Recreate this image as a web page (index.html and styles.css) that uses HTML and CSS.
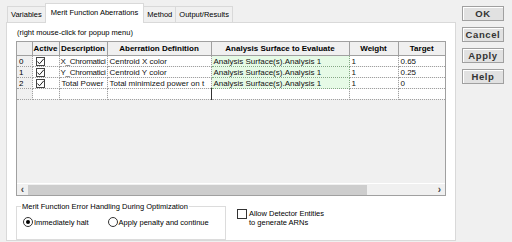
FILE: index.html
```html
<!DOCTYPE html>
<html lang="en">
<head>
    <meta charset="UTF-8">
    <title>Merit Function Aberrations</title>
    <link rel="stylesheet" href="styles.css">
</head>
<body>
    <div class="main">
        <div class="tabs">
            <div class="tab">Variables</div>
            <div class="tab active">Merit Function Aberrations</div>
            <div class="tab">Method</div>
            <div class="tab">Output/Results</div>
        </div>
        <div class="panel">
            <div class="hint">(right mouse-click for popup menu)</div>
            <div class="grid">
                <table>
                    <colgroup>
                        <col class="c-row"><col class="c-active"><col class="c-desc"><col class="c-def"><col class="c-surf"><col class="c-weight"><col class="c-target">
                    </colgroup>
                    <thead>
                        <tr>
                            <th></th>
                            <th>Active</th>
                            <th>Description</th>
                            <th>Aberration Definition</th>
                            <th>Analysis Surface to Evaluate</th>
                            <th>Weight</th>
                            <th>Target</th>
                        </tr>
                    </thead>
                    <tbody>
                        <tr>
                            <th>0</th>
                            <td><span class="check"><svg width="9" height="9" viewBox="0 0 9 9"><path d="M1.5 4.5 L3.5 6.8 L7.8 1.8" fill="none" stroke="#222" stroke-width="1"/></svg></span></td>
                            <td class="tight">X_Chromatici</td>
                            <td>Centroid X color</td>
                            <td class="surf">Analysis Surface(s).Analysis 1</td>
                            <td>1</td>
                            <td>0.65</td>
                        </tr>
                        <tr>
                            <th>1</th>
                            <td><span class="check"><svg width="9" height="9" viewBox="0 0 9 9"><path d="M1.5 4.5 L3.5 6.8 L7.8 1.8" fill="none" stroke="#222" stroke-width="1"/></svg></span></td>
                            <td class="tight">Y_Chromatici</td>
                            <td>Centroid Y color</td>
                            <td class="surf">Analysis Surface(s).Analysis 1</td>
                            <td>1</td>
                            <td>0.25</td>
                        </tr>
                        <tr>
                            <th>2</th>
                            <td><span class="check"><svg width="9" height="9" viewBox="0 0 9 9"><path d="M1.5 4.5 L3.5 6.8 L7.8 1.8" fill="none" stroke="#222" stroke-width="1"/></svg></span></td>
                            <td>Total Power</td>
                            <td>Total minimized power on t</td>
                            <td class="surf">Analysis Surface(s).Analysis 1</td>
                            <td>1</td>
                            <td>0</td>
                        </tr>
                        <tr>
                            <th></th>
                            <td></td>
                            <td></td>
                            <td></td>
                            <td class="cursor"></td>
                            <td></td>
                            <td></td>
                        </tr>
                    </tbody>
                </table>
                <div class="grid-empty"></div>
                <div class="hscroll">
                    <span class="arrow">&lsaquo;</span>
                    <span class="thumb"></span>
                    <span class="track"></span>
                    <span class="arrow">&rsaquo;</span>
                </div>
            </div>
            <div class="bottom">
                <fieldset class="group">
                    <legend>Merit Function Error Handling During Optimization</legend>
                    <div class="radios">
                        <label class="radio"><span class="dot on"></span>Immediately halt</label>
                        <label class="radio"><span class="dot"></span>Apply penalty and continue</label>
                    </div>
                </fieldset>
                <label class="option">
                    <span class="box"></span>
                    <span>Allow Detector Entities<br>to generate ARNs</span>
                </label>
            </div>
        </div>
    </div>
    <div class="buttons">
        <button>OK</button>
        <button>Cancel</button>
        <button>Apply</button>
        <button>Help</button>
    </div>
</body>
</html>
```

FILE: styles.css
```css
body {
    margin: 0;
    width: 512px;
    height: 242px;
    overflow: hidden;
    background-color: #f0f0f0;
    font-family: 'Liberation Sans', Arial, sans-serif;
    font-size: 7.5px;
    color: #000;
    display: flex;
}
.main {
    width: 456px;
    padding: 2px 0 1px 6px;
    box-sizing: border-box;
    display: flex;
    flex-direction: column;
}
.tabs {
    display: flex;
    align-items: flex-end;
    height: 20px;
    padding-left: 1px;
}
.tab {
    height: 16px;
    padding: 0 3px;
    border: 1px solid #d9d9d9;
    border-bottom: none;
    margin-right: -1px;
    display: flex;
    align-items: center;
    box-sizing: border-box;
    background-color: #f0f0f0;
}
.tab.active {
    height: 20px;
    padding: 0 5px 2px;
    background-color: white;
    position: relative;
    top: 1px;
    z-index: 1;
}
.panel {
    flex: 1;
    background-color: white;
    border: 1px solid #d9d9d9;
    padding: 0 8px 0 9px;
    display: flex;
    flex-direction: column;
}
.hint {
    margin: 5px 0 0 1px;
    height: 10px;
    line-height: 10px;
}
.grid {
    margin-top: 3px;
    width: 430px;
    height: 155px;
    border: 1px solid #a0a0a0;
    box-sizing: border-box;
    background-color: #f0f0f0;
    display: flex;
    flex-direction: column;
}
table {
    border-collapse: collapse;
    table-layout: fixed;
    width: 428px;
    font-size: 8px;
}
.c-row { width: 15px; }
.c-active { width: 27px; }
.c-desc { width: 48px; }
.c-def { width: 104px; }
.c-surf { width: 138px; }
.c-weight { width: 49px; }
.c-target { width: 47px; }
thead th {
    height: 13px;
    padding: 0;
    background-color: #f0f0f0;
    border-right: 1px solid #a0a0a0;
    border-bottom: 1px solid #a0a0a0;
    font-weight: bold;
    text-align: center;
    white-space: nowrap;
    overflow: hidden;
}
thead th:last-child {
    border-right: none;
}
tbody tr {
    height: 11px;
}
tbody th {
    padding: 0 0 0 2px;
    background-color: #f0f0f0;
    border: 1px dotted #a0a0a0;
    border-left: none;
    font-weight: normal;
    text-align: left;
}
td {
    padding: 0 0 0 2px;
    background-color: white;
    border: 1px dotted #a0a0a0;
    white-space: nowrap;
    overflow: hidden;
    line-height: 9px;
    color: #111;
}
td.tight {
    padding-left: 1px;
    letter-spacing: -0.25px;
}
td:last-child {
    border-right: none;
}
td.surf {
    background-color: #e6fae6;
    border-color: #7fb07f;
}
td.cursor {
    border-left: 1px solid #333;
}
.check {
    display: block;
    width: 9px;
    height: 9px;
    border: 1px solid #444;
    box-sizing: border-box;
    background-color: white;
    margin-left: 1px;
}
.check svg {
    display: block;
    margin: -1px 0 0 -1px;
}
.grid-empty {
    flex: 1;
}
.hscroll {
    height: 12px;
    display: flex;
    align-items: center;
    border-top: 1px solid white;
    box-sizing: border-box;
}
.arrow {
    width: 11px;
    text-align: center;
    font-size: 10px;
    font-weight: bold;
    color: #444;
    line-height: 10px;
}
.thumb {
    width: 339px;
    height: 10px;
    background-color: #cdcdcd;
}
.track {
    flex: 1;
}
.bottom {
    display: flex;
    align-items: flex-start;
    margin-top: 6px;
}
.group {
    width: 210px;
    height: 38px;
    box-sizing: border-box;
    margin: 0;
    padding: 6px 4px 0;
    border: 1px solid #dcdcdc;
}
.group legend {
    padding: 0 1px;
    line-height: 9px;
    font-size: 7.5px;
}
.radios {
    display: flex;
    align-items: center;
    gap: 19px;
    margin-left: 2px;
}
.radio {
    display: flex;
    align-items: center;
    gap: 1px;
}
.dot {
    width: 10px;
    height: 10px;
    border: 1px solid #333;
    border-radius: 50%;
    box-sizing: border-box;
    background-color: white;
    display: flex;
    align-items: center;
    justify-content: center;
}
.dot.on::after {
    content: '';
    width: 4px;
    height: 4px;
    border-radius: 50%;
    background-color: #000;
}
.option {
    display: flex;
    align-items: flex-start;
    gap: 2px;
    margin: 7px 0 0 11px;
    line-height: 9px;
}
.box {
    width: 10px;
    height: 10px;
    border: 1px solid #333;
    box-sizing: border-box;
    background-color: white;
}
.buttons {
    display: flex;
    flex-direction: column;
    gap: 6px;
    padding-top: 6px;
    margin-left: 6px;
}
button {
    width: 42px;
    height: 15px;
    padding: 0;
    background-color: #e1e1e1;
    border: 1px solid #a0a0a0;
    box-shadow: inset 1px 1px 0 #fff;
    font-family: 'Liberation Sans', Arial, sans-serif;
    font-size: 9.5px;
    font-weight: bold;
    letter-spacing: 0.6px;
    color: #333;
}
```
